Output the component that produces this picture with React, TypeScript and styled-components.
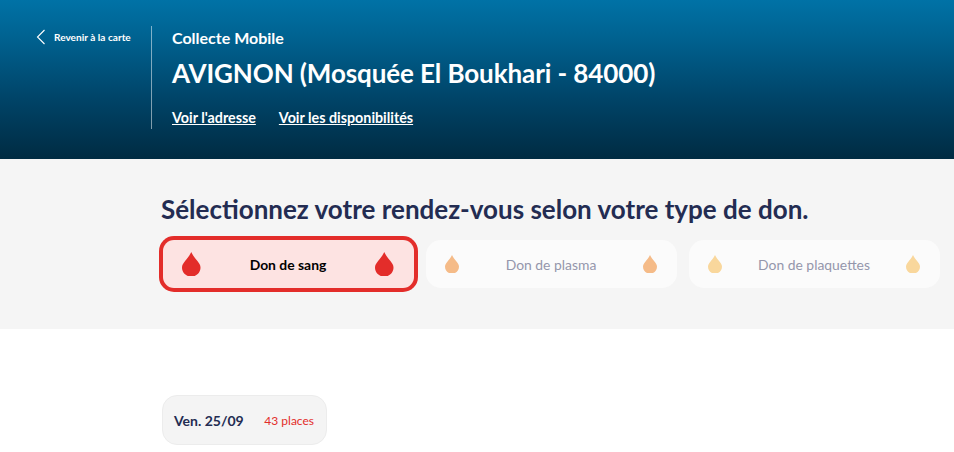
import styled, { createGlobalStyle } from "styled-components";

const GlobalStyle = createGlobalStyle`
  html, body {
    margin: 0;
    padding: 0;
    background: #ffffff;
    font-family: Lato, "Open Sans", sans-serif;
    overflow: hidden;
  }
`;

const BackChevron = () => (
  <svg width="10" height="16" viewBox="0 0 10 16" fill="none" aria-hidden="true">
    <path d="M8.5 1L1.5 8L8.5 15" stroke="#ffffff" strokeWidth="1.1" />
  </svg>
);

const DropIcon = ({ color, size }: { color: string; size: number }) => (
  <svg width={size} height={(size * 4) / 3} viewBox="0 0 18 24" aria-hidden="true">
    <path
      d="M9 0C10.4 3.4 12.6 5.6 15 8.8C16.8 11.1 18 12.8 18 15.2C18 20.1 14 24 9 24C4 24 0 20.1 0 15.2C0 12.8 1.2 11.1 3 8.8C5.4 5.6 7.6 3.4 9 0Z"
      fill={color}
    />
  </svg>
);

const tabs = [
  { label: "Don de sang", color: "#e32d2a", active: true },
  { label: "Don de plasma", color: "#f5bb88", active: false },
  { label: "Don de plaquettes", color: "#f9d79c", active: false },
];

export default function App() {
  return (
    <Page>
      <GlobalStyle />
      <Header>
        <BackLink>
          <BackChevron />
          <span>Revenir à la carte</span>
        </BackLink>
        <HeaderInfo>
          <Kicker>Collecte Mobile</Kicker>
          <Title>AVIGNON (Mosquée El Boukhari - 84000)</Title>
          <Links>
            <HeaderLink>Voir l'adresse</HeaderLink>
            <HeaderLink>Voir les disponibilités</HeaderLink>
          </Links>
        </HeaderInfo>
      </Header>
      <Selection>
        <Heading>Sélectionnez votre rendez-vous selon votre type de don.</Heading>
        <TabRow>
          {tabs.map((tab) => (
            <Tab key={tab.label} $active={tab.active}>
              <DropIcon color={tab.color} size={tab.active ? 18.5 : 14} />
              <span>{tab.label}</span>
              <DropIcon color={tab.color} size={tab.active ? 18.5 : 14} />
            </Tab>
          ))}
        </TabRow>
      </Selection>
      <Dates>
        <DateCard>
          <DateLabel>Ven. 25/09</DateLabel>
          <Places>43 places</Places>
        </DateCard>
      </Dates>
    </Page>
  );
}

const Page = styled.div`
  width: 954px;
  height: 452px;
  overflow: hidden;
`;

const Header = styled.header`
  display: flex;
  align-items: flex-start;
  box-sizing: border-box;
  height: 159px;
  padding: 26px 0 0 36px;
  background: linear-gradient(180deg, #0072a6 0%, #00618f 25%, #004468 62%, #002b42 100%);
  color: #ffffff;
`;

const BackLink = styled.a`
  display: flex;
  align-items: center;
  width: 115px;
  height: 21px;
  font-size: 10.1px;
  font-weight: 700;
  white-space: nowrap;

  span {
    margin-left: 8px;
  }
`;

const HeaderInfo = styled.div`
  display: flex;
  flex-direction: column;
  height: 103px;
  padding-left: 20px;
  border-left: 1px solid rgba(255, 255, 255, 0.5);
`;

const Kicker = styled.div`
  font-size: 16px;
  font-weight: 700;
  line-height: 24px;
`;

const Title = styled.h1`
  margin: 6px 0 0;
  font-size: 26px;
  font-weight: 700;
  line-height: 34px;
  letter-spacing: -0.1px;
`;

const Links = styled.div`
  display: flex;
  gap: 23px;
  margin-top: 18px;
`;

const HeaderLink = styled.a`
  font-size: 14.3px;
  font-weight: 700;
  line-height: 20px;
  text-decoration: underline;
`;

const Selection = styled.section`
  box-sizing: border-box;
  height: 170px;
  padding: 33px 0 0 161px;
  background: #f5f5f5;
`;

const Heading = styled.h2`
  margin: 0;
  font-size: 26px;
  font-weight: 700;
  line-height: 34px;
  color: #232c52;
`;

const TabRow = styled.div`
  display: flex;
  gap: 12px;
  margin: 14px 0 0 2px;
`;

const Tab = styled.div<{ $active: boolean }>`
  display: flex;
  align-items: center;
  justify-content: space-between;
  box-sizing: border-box;
  width: 251px;
  height: 48px;
  padding: 0 20px 0 19px;
  border-radius: ${(p) => (p.$active ? "11px" : "15px")};
  background: ${(p) => (p.$active ? "#fde3e2" : "#fbfbfb")};
  box-shadow: ${(p) => (p.$active ? "0 0 0 4px #e32d2a" : "none")};
  font-size: 13.9px;
  font-weight: ${(p) => (p.$active ? 700 : 400)};
  color: ${(p) => (p.$active ? "#000000" : "#9496ab")};
`;

const Dates = styled.section`
  padding: 66px 0 0 162px;
`;

const DateCard = styled.div`
  display: flex;
  align-items: center;
  justify-content: space-between;
  box-sizing: border-box;
  width: 165px;
  height: 50px;
  padding: 0 12px 0 11px;
  border: 1px solid #ececec;
  border-radius: 15px;
  background: #f4f4f4;
`;

const DateLabel = styled.span`
  font-size: 14px;
  font-weight: 700;
  color: #232c52;
`;

const Places = styled.span`
  font-size: 12px;
  color: #e32d2a;
`;
